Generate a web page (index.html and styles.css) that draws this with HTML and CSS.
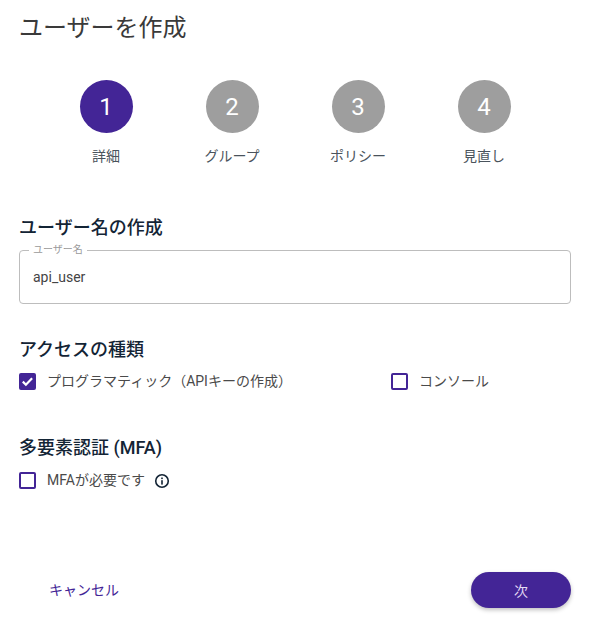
FILE: index.html
```html
<!DOCTYPE html>
<html lang="ja">
<head>
    <meta charset="UTF-8">
    <meta name="viewport" content="width=device-width, initial-scale=1.0">
    <title>ユーザーを作成</title>
    <link rel="stylesheet" href="styles.css">
</head>
<body>
    <div class="dialog">
        <h1 class="dialog-title">ユーザーを作成</h1>

        <div class="stepper">
            <div class="step active">
                <div class="step-circle">1</div>
                <div class="step-label">詳細</div>
            </div>
            <div class="step">
                <div class="step-circle">2</div>
                <div class="step-label">グループ</div>
            </div>
            <div class="step">
                <div class="step-circle">3</div>
                <div class="step-label">ポリシー</div>
            </div>
            <div class="step">
                <div class="step-circle">4</div>
                <div class="step-label">見直し</div>
            </div>
        </div>

        <h2 class="section-title first">ユーザー名の作成</h2>
        <fieldset class="outlined-field">
            <legend>ユーザー名</legend>
            <div class="field-value">api_user</div>
        </fieldset>

        <h2 class="section-title access">アクセスの種類</h2>
        <div class="check-row">
            <div class="check-item wide">
                <span class="checkbox checked">
                    <svg viewBox="0 0 13 13" width="13" height="13"><path d="M1.8 6.6l3.1 3.1 6.2-6.4" fill="none" stroke="#fff" stroke-width="2.2"/></svg>
                </span>
                <span>プログラマティック（APIキーの作成）</span>
            </div>
            <div class="check-item">
                <span class="checkbox"></span>
                <span>コンソール</span>
            </div>
        </div>

        <h2 class="section-title mfa">多要素認証 (MFA)</h2>
        <div class="check-row mfa-row">
            <div class="check-item">
                <span class="checkbox"></span>
                <span>MFAが必要です</span>
                <svg class="info-icon" viewBox="0 0 24 24" width="16" height="16">
                    <circle cx="12" cy="12" r="9.4" fill="none" stroke="#132435" stroke-width="2.4"/>
                    <rect x="10.8" y="10.8" width="2.4" height="6.6" fill="#132435"/>
                    <rect x="10.8" y="6.8" width="2.4" height="2.4" fill="#132435"/>
                </svg>
            </div>
        </div>

        <div class="dialog-footer">
            <button class="btn-cancel">キャンセル</button>
            <button class="btn-next">次</button>
        </div>
    </div>
</body>
</html>
```

FILE: styles.css
```css
* {
    box-sizing: border-box;
}

body {
    margin: 0;
    background-color: #fff;
    font-family: Roboto, "Noto Sans CJK JP", sans-serif;
    color: #333;
    overflow: hidden;
}

.dialog {
    width: 591px;
    height: 630px;
    padding: 12px 20px 0 19px;
}

.dialog-title {
    margin: 0;
    font-size: 24px;
    line-height: 32px;
    font-weight: 400;
    color: #3a3a3a;
}

.stepper {
    display: flex;
    margin-top: 36px;
    padding-left: 24px;
}

.step {
    width: 126px;
    display: flex;
    flex-direction: column;
    align-items: center;
}

.step-circle {
    width: 53px;
    height: 53px;
    border-radius: 50%;
    background-color: #9e9e9e;
    color: #fff;
    font-size: 24px;
    display: flex;
    align-items: center;
    justify-content: center;
}

.step.active .step-circle {
    background-color: #432596;
}

.step-label {
    margin-top: 13px;
    font-size: 14px;
    line-height: 20px;
    color: #4a535c;
}

.section-title {
    margin: 0;
    font-size: 18px;
    line-height: 24px;
    font-weight: 500;
    color: #132435;
}

.section-title.first {
    margin-top: 50px;
}

.section-title.access {
    margin-top: 34px;
}

.section-title.mfa {
    margin-top: 45px;
}

.outlined-field {
    margin: 4px 0 0;
    padding: 0 13px;
    height: 60px;
    border: 1px solid #bdbdbd;
    border-radius: 4px;
}

.outlined-field legend {
    padding: 0 4px;
    margin-left: -4px;
    font-size: 10px;
    line-height: 12px;
    color: #9a9a9a;
}

.field-value {
    margin-top: 11px;
    font-size: 14px;
    line-height: 20px;
    color: #444;
}

.check-row {
    display: flex;
    margin-top: 9px;
}

.mfa-row {
    margin-top: 10px;
}

.check-item {
    display: flex;
    align-items: center;
    font-size: 14px;
    line-height: 20px;
    color: #4a4a4a;
}

.check-item.wide {
    width: 372px;
}

.checkbox {
    width: 17px;
    height: 17px;
    margin-right: 11px;
    margin-top: 1px;
    border: 2px solid #432596;
    border-radius: 2px;
    display: flex;
    align-items: center;
    justify-content: center;
}

.checkbox.checked {
    background-color: #432596;
}

.info-icon {
    margin-left: 9px;
    margin-top: 1px;
}

.dialog-footer {
    display: flex;
    justify-content: space-between;
    align-items: center;
    margin-top: 82px;
}

.btn-cancel {
    margin-left: 30px;
    margin-bottom: 2px;
    padding: 0;
    border: none;
    background: none;
    font: inherit;
    font-size: 14px;
    color: #432596;
}

.btn-next {
    width: 100px;
    height: 36px;
    border: none;
    border-radius: 18px;
    background-color: #432596;
    color: #e4dcf5;
    font: inherit;
    font-size: 14px;
    box-shadow: 0 2px 4px rgba(0, 0, 0, 0.25);
}
```
